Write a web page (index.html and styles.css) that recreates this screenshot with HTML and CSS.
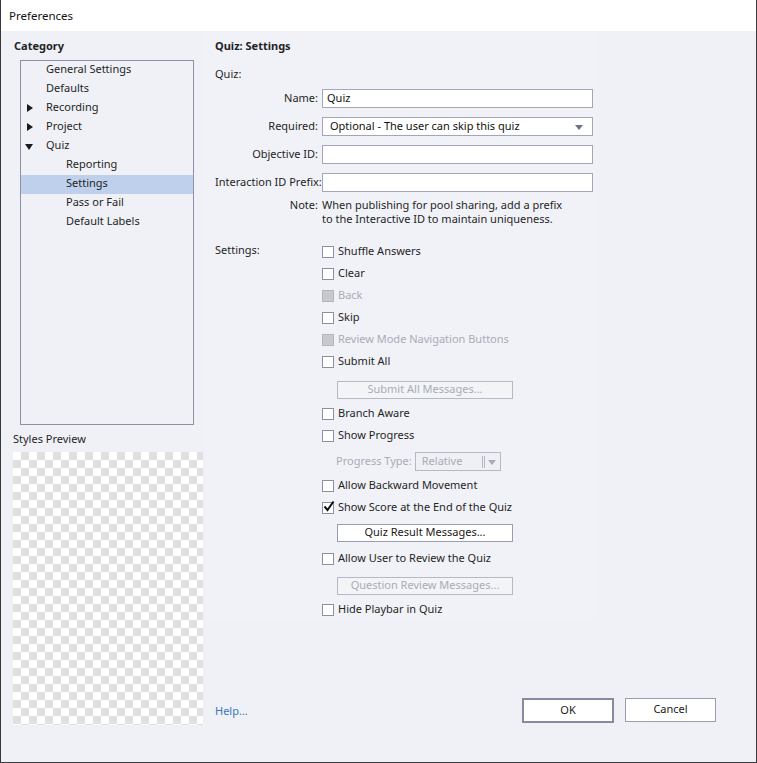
FILE: index.html
```html
<!DOCTYPE html>
<html>
<head>
<meta charset="utf-8">
<link rel="stylesheet" href="styles.css">
</head>
<body>
<div class="window">
  <div class="titlebar">Preferences</div>
  <div class="main">
    <div class="left">
      <div class="heading">Category</div>
      <div class="tree">
        <div class="item l1">General Settings</div>
        <div class="item l1">Defaults</div>
        <div class="item l1"><svg class="arrow" width="6" height="8" viewBox="0 0 6 8"><path d="M0 0 L6 4 L0 8 Z"/></svg>Recording</div>
        <div class="item l1"><svg class="arrow" width="6" height="8" viewBox="0 0 6 8"><path d="M0 0 L6 4 L0 8 Z"/></svg>Project</div>
        <div class="item l1"><svg class="arrow down" width="8" height="6" viewBox="0 0 8 6"><path d="M0 0 L8 0 L4 6 Z"/></svg>Quiz</div>
        <div class="item l2">Reporting</div>
        <div class="item l2 selected">Settings</div>
        <div class="item l2">Pass or Fail</div>
        <div class="item l2">Default Labels</div>
      </div>
      <div class="preview-label">Styles Preview</div>
      <div class="preview"></div>
    </div>
    <div class="right">
      <div class="panel">
        <div class="heading">Quiz: Settings</div>
        <div class="section-label">Quiz:</div>
        <div class="form">
          <label class="flabel">Name:</label>
          <div class="input">Quiz</div>
          <label class="flabel">Required:</label>
          <div class="input select">Optional - The user can skip this quiz<svg class="caret" width="8" height="5" viewBox="0 0 8 5"><path d="M0 0 L8 0 L4 5 Z"/></svg></div>
          <label class="flabel">Objective ID:</label>
          <div class="input"></div>
          <label class="flabel">Interaction ID Prefix:</label>
          <div class="input"></div>
        </div>
        <div class="note">
          <div class="note-label">Note:</div>
          <div class="note-text">When publishing for pool sharing, add a prefix<br>to the Interactive ID to maintain uniqueness.</div>
        </div>
        <div class="settings">
          <div class="settings-label">Settings:</div>
          <div class="options">
            <div class="opt"><span class="cb"></span>Shuffle Answers</div>
            <div class="opt"><span class="cb"></span>Clear</div>
            <div class="opt disabled"><span class="cb"></span>Back</div>
            <div class="opt"><span class="cb"></span>Skip</div>
            <div class="opt disabled"><span class="cb"></span>Review Mode Navigation Buttons</div>
            <div class="opt"><span class="cb"></span>Submit All</div>
            <div class="btn sub disabled b-submit">Submit All Messages...</div>
            <div class="opt"><span class="cb"></span>Branch Aware</div>
            <div class="opt"><span class="cb"></span>Show Progress</div>
            <div class="ptype">
              <span class="ptype-label">Progress Type:</span>
              <div class="pselect"><span class="pval">Relative</span><span class="pbars"></span><svg class="caret2" width="8" height="5" viewBox="0 0 8 5"><path d="M0 0 L8 0 L4 5 Z"/></svg></div>
            </div>
            <div class="opt"><span class="cb"></span>Allow Backward Movement</div>
            <div class="opt"><span class="cb checked"><svg width="14" height="14" viewBox="0 0 14 14"><path d="M2.5 6.5 L5.5 10 L11.5 1.5" fill="none" stroke="#111" stroke-width="2"/></svg></span>Show Score at the End of the Quiz</div>
            <div class="btn sub b-result">Quiz Result Messages...</div>
            <div class="opt"><span class="cb"></span>Allow User to Review the Quiz</div>
            <div class="btn sub disabled b-review">Question Review Messages...</div>
            <div class="opt"><span class="cb"></span>Hide Playbar in Quiz</div>
          </div>
        </div>
      </div>
      <div class="footer">
        <a class="help">Help...</a>
        <div class="buttons">
          <div class="btn dlg ok">OK</div>
          <div class="btn dlg cancel">Cancel</div>
        </div>
      </div>
    </div>
  </div>
</div>
</body>
</html>
```

FILE: styles.css
```css
* { box-sizing: border-box; }
html, body { margin: 0; padding: 0; }
body {
  font-family: "Noto Sans", "Open Sans", sans-serif;
  font-size: 11px;
  color: #1f1f24;
  background: #eff1f7;
}
.window {
  width: 757px;
  height: 763px;
  border: 1px solid #3a3a3e;
  border-top: none;
  background: #eff1f7;
  display: flex;
  flex-direction: column;
}
.titlebar {
  height: 31px;
  background: #ffffff;
  padding-left: 8px;
  line-height: 31px;
  font-size: 11.5px;
  color: #111;
}
.main {
  display: flex;
  flex: 1;
}
.left {
  width: 204px;
  padding-left: 12px;
  padding-top: 7px;
}
.heading {
  font-weight: bold;
  line-height: 15px;
  height: 15px;
  padding-left: 1px;
}
.tree {
  margin-top: 7px;
  margin-left: 7px;
  width: 174px;
  height: 365px;
  border: 1px solid #8f90a6;
}
.item {
  height: 19px;
  line-height: 16px;
  position: relative;
  white-space: nowrap;
}
.item.l1 { padding-left: 25px; }
.item.l2 { padding-left: 45px; }
.item.selected { background: #bed0ec; }
.arrow {
  position: absolute;
  left: 6px;
  top: 5px;
  fill: #1a1a1a;
}
.arrow.down { left: 4px; top: 7px; }
.preview-label {
  margin-top: 6px;
  line-height: 15px;
  height: 15px;
}
.preview {
  margin-top: 6px;
  width: 190px;
  height: 273px;
  background: repeating-conic-gradient(#e0e0e0 0 25%, #ffffff 0 50%) 0 0 / 16px 16px;
}
.right {
  flex: 1;
  display: flex;
  flex-direction: column;
}
.panel {
  width: 391px;
  height: 589px;
  background: #f1f2f8;
  padding-left: 10px;
  padding-top: 7px;
}
.panel .heading { padding-left: 0; }
.section-label {
  margin-top: 13px;
  line-height: 15px;
  height: 15px;
}
.form {
  margin-top: 8px;
  display: grid;
  grid-template-columns: 103px 271px;
  column-gap: 4px;
  row-gap: 9px;
}
.flabel {
  text-align: right;
  line-height: 17px;
  height: 19px;
  white-space: nowrap;
}
.input {
  height: 19px;
  background: #fff;
  border: 1px solid #a4a6b8;
  line-height: 16px;
  padding-left: 4px;
  position: relative;
  color: #111;
}
.input.select { padding-left: 7px; }
.caret {
  position: absolute;
  right: 9px;
  top: 7px;
  fill: #6e7186;
}
.note {
  margin-top: 6px;
  display: flex;
  gap: 4px;
  line-height: 14px;
}
.note-label { width: 103px; text-align: right; }
.settings {
  margin-top: 14px;
  display: flex;
}
.settings-label {
  width: 107px;
  line-height: 20px;
}
.options {
  display: flex;
  flex-direction: column;
}
.opt {
  height: 22px;
  display: flex;
  align-items: center;
  white-space: nowrap;
  line-height: 20px;
}
.cb {
  width: 12px;
  height: 12px;
  border: 1px solid #8d8fa6;
  background: #fff;
  margin-right: 4px;
  position: relative;
  flex: none;
  margin-top: 1px;
}
.cb.checked svg {
  position: absolute;
  left: -1px;
  top: -3px;
}
.opt.disabled { color: #a9abb6; }
.opt.disabled .cb {
  background: #c9c9cc;
  border-color: #b3b4bd;
}
.btn {
  background: #ffffff;
  border: 1px solid #9a9db2;
  text-align: center;
  color: #1a1a1a;
}
.btn.sub {
  width: 176px;
  height: 18px;
  line-height: 14px;
  margin-left: 15px;
}
.btn.disabled {
  color: #a9abb6;
  background: #f3f4f8;
  border-color: #b6b8c6;
}
.b-submit { margin-top: 9px; margin-bottom: 3px; }
.b-result { margin-top: 6px; margin-bottom: 5px; }
.b-review { margin-top: 8px; margin-bottom: 3px; }
.ptype {
  height: 28px;
  display: flex;
  align-items: flex-start;
  padding-top: 6px;
  padding-left: 14px;
  color: #a9abb6;
}
.ptype-label { line-height: 18px; margin-right: 3px; }
.pselect {
  width: 86px;
  height: 19px;
  border: 1px solid #b6b8c6;
  background: #eef0f5;
  position: relative;
  line-height: 15px;
  padding-left: 6px;
}
.pbars {
  position: absolute;
  left: 66px;
  top: 3px;
  width: 3px;
  height: 12px;
  border-left: 1px solid #b6b8c6;
  border-right: 1px solid #b6b8c6;
}
.caret2 {
  position: absolute;
  right: 4px;
  top: 7px;
  fill: #a9abb6;
}
.footer {
  margin-top: 78px;
  display: flex;
  align-items: center;
  padding-left: 10px;
  padding-right: 40px;
}
.help {
  color: #3a77b8;
  line-height: 15px;
}
.buttons {
  margin-left: auto;
  display: flex;
  gap: 11px;
  align-items: flex-start;
}
.btn.dlg {
  width: 91px;
  height: 24px;
  line-height: 20px;
}
.btn.ok {
  width: 92px;
  height: 25px;
  border: 2px solid #878aa0;
  line-height: 19px;
}
```
